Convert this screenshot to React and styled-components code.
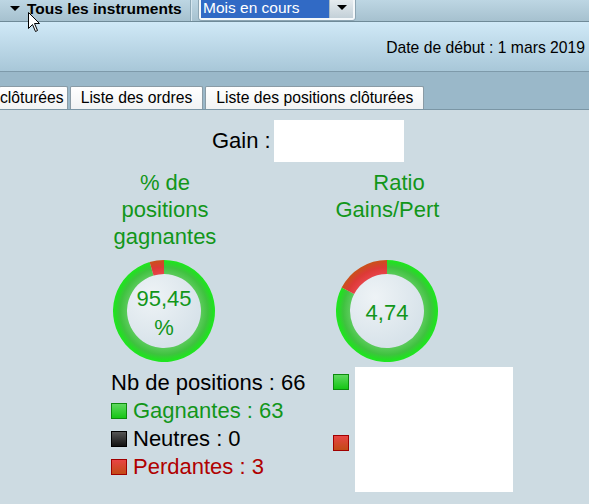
import React from "react";
import styled, { createGlobalStyle } from "styled-components";

const Global = createGlobalStyle`
  html, body { margin: 0; padding: 0; }
  body {
    width: 589px;
    height: 504px;
    overflow: hidden;
    background: #cddbe2;
    font-family: "Liberation Sans", Arial, sans-serif;
  }
`;

const Page = styled.div`
  position: relative;
  width: 589px;
  height: 504px;
  overflow: hidden;
  background: #cddbe2;
`;

/* ---------- toolbar ---------- */
const Toolbar = styled.div`
  height: 21px;
  display: flex;
  align-items: flex-start;
  background: linear-gradient(#bdd6e3, #a6c1cf);
  border-bottom: 1px solid #6f8a98;
`;

const InstrumentMenu = styled.div`
  display: flex;
  align-items: center;
  gap: 7px;
  height: 18px;
  padding-left: 10px;
  width: 180px;
  font-weight: bold;
  font-size: 15.5px;
  color: #000;
  white-space: nowrap;
`;

const Separator = styled.div`
  width: 1px;
  height: 21px;
  background: #8ea9b7;
  border-right: 1px solid #d5e6ef;
`;

const PeriodSelect = styled.div`
  margin-left: 7px;
  margin-top: -2px;
  width: 152px;
  height: 20px;
  display: flex;
  border: 2px solid #f4f8fa;
  border-top: none;
  border-radius: 0 0 3px 3px;
  box-shadow: 0 0 0 1px #8ca5b3;
`;

const SelectValue = styled.div`
  flex: 1;
  background: #316ac5;
  color: #fff;
  font-size: 15.5px;
  line-height: 20px;
  padding-left: 2px;
  white-space: nowrap;
`;

const SelectButton = styled.div`
  width: 23px;
  display: flex;
  align-items: center;
  justify-content: center;
  background: linear-gradient(#e9eef1, #c3d0d8);
  border-left: 1px solid #a9bac4;
`;

/* ---------- date band ---------- */
const DateBand = styled.div`
  height: 50px;
  display: flex;
  align-items: center;
  justify-content: flex-end;
  padding-right: 4px;
  padding-top: 2px;
  box-sizing: border-box;
  background: linear-gradient(#d0e9f7, #a8c7d8);
  border-bottom: 1px solid #7e9aaa;
  font-size: 15.7px;
  color: #000;
`;

/* ---------- tabs ---------- */
const TabStrip = styled.div`
  height: 37px;
  display: flex;
  align-items: flex-end;
  gap: 2px;
  background: #9ab8c9;
  border-bottom: 1px solid #7b96a5;
`;

const Tab = styled.div`
  height: 22px;
  display: flex;
  align-items: center;
  margin-left: ${(p) => p.$offset || 0}px;
  padding-left: ${(p) => (p.$offset ? 0 : 10)}px;
  padding-right: ${(p) => (p.$offset ? 3 : 10)}px;
  background: linear-gradient(#ffffff, #f1f3f4);
  border: 1px solid #8a9ba5;
  border-bottom: none;
  border-radius: 2px 2px 0 0;
  font-size: 15.7px;
  color: #000;
  white-space: nowrap;
`;

/* ---------- content ---------- */
const Content = styled.div`
  padding-top: 10px;
`;

const GainRow = styled.div`
  display: flex;
  align-items: center;
  gap: 3px;
  padding-left: 212px;
`;

const Label = styled.span`
  font-size: 22px;
  color: #000;
`;

const BlankBox = styled.div`
  width: ${(p) => p.$w}px;
  height: ${(p) => p.$h}px;
  background: #fff;
`;

const Charts = styled.div`
  display: flex;
  gap: 119px;
  padding-left: 113px;
  margin-top: 7px;
`;

const ChartColumn = styled.div`
  width: 104px;
  overflow: ${(p) => (p.$clip ? "hidden" : "visible")};
`;

const ChartTitle = styled.div`
  width: ${(p) => p.$width}px;
  margin-left: ${(p) => p.$shift}px;
  height: 90px;
  font-size: 22px;
  line-height: 27px;
  color: #12961a;
  text-align: center;
  white-space: nowrap;
`;

const DonutWrap = styled.div`
  position: relative;
  width: 104px;
  height: 104px;
  margin-left: -1px;
`;

const DonutLabel = styled.div`
  position: absolute;
  inset: 0;
  display: flex;
  align-items: center;
  justify-content: center;
  padding-top: ${(p) => p.$drop}px;
  box-sizing: border-box;
  font-size: 22px;
  line-height: 29px;
  color: #12961a;
  text-align: center;
`;

const Legends = styled.div`
  display: flex;
  padding-left: 111px;
  margin-top: 6px;
`;

const LegendList = styled.div`
  width: 222px;
  font-size: 22px;
  line-height: 28px;
`;

const LegendItem = styled.div`
  display: flex;
  align-items: center;
  gap: 6px;
  color: ${(p) => p.$color};
  white-space: nowrap;
`;

const Swatch = styled.span`
  display: inline-block;
  width: 14px;
  height: 14px;
  border: 1px solid ${(p) => p.$border};
  background: linear-gradient(${(p) => p.$top}, ${(p) => p.$bottom});
  flex: none;
`;

const RatioLegend = styled.div`
  display: flex;
  gap: 6px;
  margin-top: -2px;
`;

const SwatchColumn = styled.div`
  display: flex;
  flex-direction: column;
  gap: 45px;
  padding-top: 7px;
`;

const Cursor = styled.svg`
  position: absolute;
  left: 28px;
  top: 12px;
`;

const SWATCHES = {
  green: { $top: "#5ed85e", $bottom: "#16c616", $border: "#0d8a0d" },
  black: { $top: "#555", $bottom: "#111", $border: "#000" },
  red: { $top: "#e84444", $bottom: "#c24a16", $border: "#a00000" },
};

function sector(c, r0, r1, a0, a1) {
  const p = (r, a) => [c + r * Math.sin(a), c - r * Math.cos(a)];
  const large = a1 - a0 > Math.PI ? 1 : 0;
  const [x0, y0] = p(r1, a0);
  const [x1, y1] = p(r1, a1);
  const [x2, y2] = p(r0, a1);
  const [x3, y3] = p(r0, a0);
  return `M${x0},${y0} A${r1},${r1} 0 ${large} 1 ${x1},${y1} L${x2},${y2} A${r0},${r0} 0 ${large} 0 ${x3},${y3} Z`;
}

function Donut({ id, share, children, drop }) {
  const c = 52;
  const r1 = 51;
  const r0 = 37;
  const split = share * Math.PI * 2;
  return (
    <DonutWrap>
      <svg width="104" height="104" viewBox="0 0 104 104">
        <defs>
          <radialGradient id={`g-${id}`} cx="52" cy="52" r="51" gradientUnits="userSpaceOnUse">
            <stop offset="0.72" stopColor="#5ccb5c" />
            <stop offset="0.86" stopColor="#3fc23f" />
            <stop offset="0.95" stopColor="#25dc25" />
            <stop offset="1" stopColor="#1ee81e" />
          </radialGradient>
          <radialGradient id={`r-${id}`} cx="52" cy="52" r="51" gradientUnits="userSpaceOnUse">
            <stop offset="0.72" stopColor="#e8444a" />
            <stop offset="0.86" stopColor="#dc3a36" />
            <stop offset="1" stopColor="#c8521a" />
          </radialGradient>
          <radialGradient id={`c-${id}`} cx="40" cy="38" r="50" gradientUnits="userSpaceOnUse">
            <stop offset="0" stopColor="#eef3f6" />
            <stop offset="1" stopColor="#d8e3ea" />
          </radialGradient>
        </defs>
        <circle cx={c} cy={c} r={r0} fill={`url(#c-${id})`} />
        <path d={sector(c, r0, r1, 0, split)} fill={`url(#g-${id})`} />
        <path d={sector(c, r0, r1, split, Math.PI * 2 - 0.0001)} fill={`url(#r-${id})`} />
      </svg>
      <DonutLabel $drop={drop}>{children}</DonutLabel>
    </DonutWrap>
  );
}

export default function App() {
  return (
    <>
      <Global />
      <Page>
        <Toolbar>
          <InstrumentMenu>
            <svg width="10" height="6" viewBox="0 0 10 6">
              <path d="M0,0 L10,0 L5,5 Z" fill="#000" />
            </svg>
            Tous les instruments
          </InstrumentMenu>
          <Separator />
          <PeriodSelect>
            <SelectValue>Mois en cours</SelectValue>
            <SelectButton>
              <svg width="10" height="6" viewBox="0 0 10 6">
                <path d="M0,0 L10,0 L5,5 Z" fill="#000" />
              </svg>
            </SelectButton>
          </PeriodSelect>
        </Toolbar>

        <DateBand>Date de début : 1 mars 2019</DateBand>

        <TabStrip>
          <Tab $offset={-1}>clôturées</Tab>
          <Tab>Liste des ordres</Tab>
          <Tab>Liste des positions clôturées</Tab>
        </TabStrip>

        <Content>
          <GainRow>
            <Label>Gain :</Label>
            <BlankBox $w={130} $h={42} />
          </GainRow>

          <Charts>
            <ChartColumn>
              <ChartTitle $width={112} $shift={-4}>
                % de
                <br />
                positions
                <br />
                gagnantes
              </ChartTitle>
              <Donut id="win" share={0.9545} drop={4}>
                95,45
                <br />%
              </Donut>
            </ChartColumn>
            <ChartColumn $clip>
              <ChartTitle $width={128} $shift={-1}>
                Ratio
                <br />
                Gains/Pertes
              </ChartTitle>
              <Donut id="ratio" share={0.826} drop={2}>
                4,74
              </Donut>
            </ChartColumn>
          </Charts>

          <Legends>
            <LegendList>
              <LegendItem $color="#000">Nb de positions : 66</LegendItem>
              <LegendItem $color="#12961a">
                <Swatch {...SWATCHES.green} />
                Gagnantes : 63
              </LegendItem>
              <LegendItem $color="#000">
                <Swatch {...SWATCHES.black} />
                Neutres : 0
              </LegendItem>
              <LegendItem $color="#b00000">
                <Swatch {...SWATCHES.red} />
                Perdantes : 3
              </LegendItem>
            </LegendList>
            <RatioLegend>
              <SwatchColumn>
                <Swatch {...SWATCHES.green} />
                <Swatch {...SWATCHES.red} />
              </SwatchColumn>
              <BlankBox $w={158} $h={125} />
            </RatioLegend>
          </Legends>
        </Content>

        <Cursor width="13" height="21" viewBox="0 0 13 21">
          <path
            d="M0.5,0.5 L0.5,16.5 L4.5,12.5 L7.5,19.5 L9.5,18.5 L6.5,11.5 L11.5,11.5 Z"
            fill="#fff"
            stroke="#000"
            strokeWidth="1"
          />
        </Cursor>
      </Page>
    </>
  );
}
